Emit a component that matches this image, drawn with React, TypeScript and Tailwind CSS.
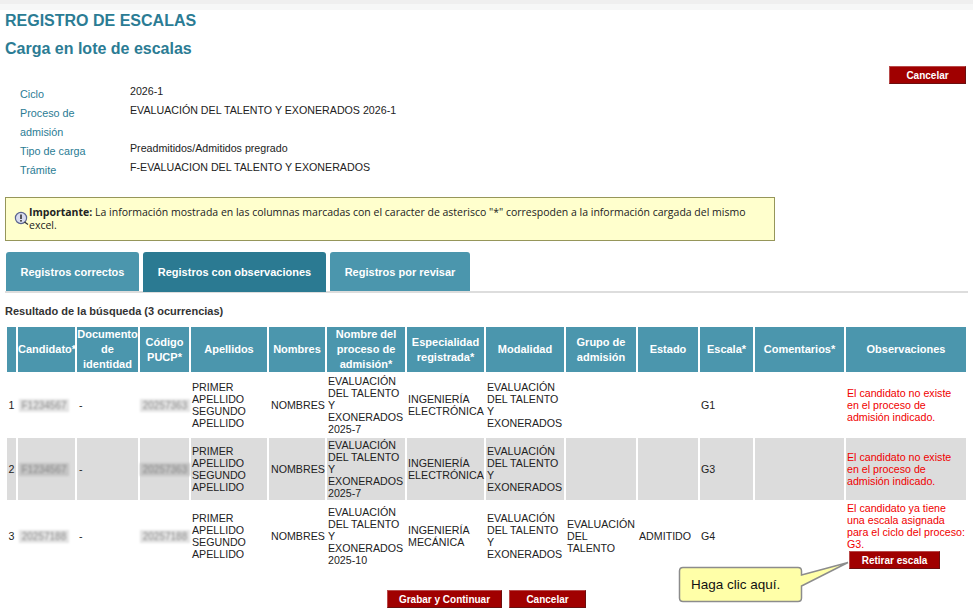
const columns = [
  { label: '', width: 'w-[9px]' },
  { label: 'Candidato*', width: 'w-[57px]' },
  { label: 'Documento de identidad', width: 'w-[61px]' },
  { label: 'Código PUCP*', width: 'w-[49px]' },
  { label: 'Apellidos', width: 'w-[76px]' },
  { label: 'Nombres', width: 'w-[56px]' },
  { label: 'Nombre del proceso de admisión*', width: 'w-[78px]' },
  { label: 'Especialidad registrada*', width: 'w-[77px]' },
  { label: 'Modalidad', width: 'w-[78px]' },
  { label: 'Grupo de admisión', width: 'w-[70px]' },
  { label: 'Estado', width: 'w-[60px]' },
  { label: 'Escala*', width: 'w-[53px]' },
  { label: 'Comentarios*', width: 'w-[89px]' },
  { label: 'Observaciones', width: 'w-[120px]' },
];

const rows = [
  {
    n: 1,
    candidato: 'F1234567',
    codigo: '20257363',
    proceso: 'EVALUACIÓN DEL TALENTO Y EXONERADOS 2025-7',
    especialidad: 'INGENIERÍA ELECTRÓNICA',
    grupo: '',
    estado: '',
    escala: 'G1',
    obs: 'El candidato no existe en el proceso de admisión indicado.',
  },
  {
    n: 2,
    candidato: 'F1234567',
    codigo: '20257363',
    proceso: 'EVALUACIÓN DEL TALENTO Y EXONERADOS 2025-7',
    especialidad: 'INGENIERÍA ELECTRÓNICA',
    grupo: '',
    estado: '',
    escala: 'G3',
    obs: 'El candidato no existe en el proceso de admisión indicado.',
  },
  {
    n: 3,
    candidato: '20257188',
    codigo: '20257188',
    proceso: 'EVALUACIÓN DEL TALENTO Y EXONERADOS 2025-10',
    especialidad: 'INGENIERÍA MECÁNICA',
    grupo: 'EVALUACIÓN DEL TALENTO',
    estado: 'ADMITIDO',
    escala: 'G4',
    obs: 'El candidato ya tiene una escala asignada para el ciclo del proceso: G3.',
  },
];

const infoRows = [
  { label: 'Ciclo', value: '2026-1' },
  { label: 'Proceso de admisión', value: 'EVALUACIÓN DEL TALENTO Y EXONERADOS 2026-1' },
  { label: 'Tipo de carga', value: 'Preadmitidos/Admitidos pregrado' },
  { label: 'Trámite', value: 'F-EVALUACION DEL TALENTO Y EXONERADOS' },
];

function RedButton({ label, className }: { label: string; className: string }) {
  return (
    <button className={`h-[18px] border border-t-[#b84a4a] border-l-[#b84a4a] border-r-[#6b0f0f] border-b-[#6b0f0f] bg-[#a00000] pt-[2px] text-center text-[10px] font-bold leading-[14px] text-white ${className}`}>
      {label}
    </button>
  );
}

function Blurred({ text, halo }: { text: string; halo?: boolean }) {
  return (
    <span className={`block h-[13px] w-[50px] blur-[1.2px] ${halo ? 'bg-[#c4c4c4]' : 'bg-[#e4e4e4]'} text-center text-[10px] leading-[13px] text-[#8a8a8a]`}>
      {text}
    </span>
  );
}

export default function App() {
  return (
    <div className="relative h-[613px] w-[973px] overflow-hidden bg-white font-['Liberation_Sans',Arial,sans-serif] text-[#222]">
      <div className="h-[4px] bg-[#efefef]" />
      <div className="h-[6px] bg-[#f6f7f7]" />

      <div className="px-[5px]">
        <h1 className="mt-[1px] text-[16px] font-bold leading-[19px] text-[#2b7c94]">REGISTRO DE ESCALAS</h1>
        <h2 className="mt-[9px] text-[16px] font-bold leading-[19px] text-[#2b7c94]">Carga en lote de escalas</h2>

        <div className="mt-[8px] flex justify-end pr-[2px]">
          <RedButton label="Cancelar" className="w-[77px]" />
        </div>

        <div className="mt-px pl-[15px]">
          {infoRows.map((row) => (
            <div key={row.label} className="flex leading-[19px]">
              <div className="w-[110px] pr-[30px] text-[10.8px] text-[#2b7c94]">{row.label}</div>
              <div className="mt-[-3px] text-[10.67px] text-[#222]">{row.value}</div>
            </div>
          ))}
        </div>

        <div className="mt-[17px] flex h-[44px] w-[770px] items-start border border-[#96965a] bg-[#ffffcd] pl-[8px] pr-[10px] pt-[8px]">
          <svg width="15" height="15" viewBox="0 0 15 15" className="mt-[5px] shrink-0">
            <circle cx="7" cy="7" r="5.6" fill="#d9dcef" stroke="#5a6490" strokeWidth="1.2" />
            <rect x="6.2" y="3.5" width="1.6" height="4.5" fill="#333" />
            <rect x="6.2" y="9" width="1.6" height="1.6" fill="#333" />
            <path d="M10.5 11 L14 13.5" stroke="#333" strokeWidth="1.2" />
          </svg>
          <p className="font-['Open_Sans',sans-serif] text-[10.5px] leading-[13px] text-[#222]">
            <b>Importante:</b> La información mostrada en las columnas marcadas con el caracter de asterisco "*" correspoden a la información cargada del mismo excel.
          </p>
        </div>

        <div className="mt-[11px] flex h-[41px] items-start gap-[4px] border-b-2 border-[#dddddd] pl-px">
          <div className="flex h-[39px] w-[133px] items-center justify-center rounded-t-[3px] bg-[#4b96ad] pt-px text-[11px] font-bold text-white">Registros correctos</div>
          <div className="flex h-[40px] w-[183px] items-center justify-center rounded-t-[3px] bg-[#2b7a92] pt-px text-[11px] font-bold text-white">Registros con observaciones</div>
          <div className="flex h-[39px] w-[140px] items-center justify-center rounded-t-[3px] bg-[#4b96ad] pt-px text-[11px] font-bold text-white">Registros por revisar</div>
        </div>

        <p className="mt-[11px] text-[11px] font-bold leading-[14px] text-[#333]">Resultado de la búsqueda (3 ocurrencias)</p>

        <table className="mt-[9px] w-[963px] table-fixed border-separate border-spacing-x-[2px] border-spacing-y-0 text-[10.67px] leading-[12px] text-[#222]">
          <thead>
            <tr>
              {columns.map((col) => (
                <th key={col.label} className={`${col.width} h-[45px] bg-[#4b96ad] p-0 text-center text-[11px] font-bold leading-[15px] text-white`}>
                  {col.label}
                </th>
              ))}
            </tr>
          </thead>
          <tbody>
            {rows.map((row) => {
              const bg = row.n === 2 ? 'bg-[#dcdcdc]' : '';
              const td = `${bg} px-px align-middle`;
              return (
                <tr key={row.n} className={row.n === 1 ? 'h-[66px]' : row.n === 2 ? 'h-[62px]' : 'h-[72px]'}>
                  <td className={`${td} text-center`}>{row.n}</td>
                  <td className={td}><Blurred text={row.candidato} halo={row.n === 2} /></td>
                  <td className={`${td} pl-[2px]`}>-</td>
                  <td className={`${bg} p-0 align-middle`}><Blurred text={row.codigo} halo={row.n === 2} /></td>
                  <td className={td}>PRIMER APELLIDO SEGUNDO APELLIDO</td>
                  <td className={`${td} pl-[2px] pr-0`}>NOMBRES</td>
                  <td className={td}>{row.proceso}</td>
                  <td className={td}>{row.especialidad}</td>
                  <td className={`${td} pr-0`}>EVALUACIÓN DEL TALENTO Y EXONERADOS</td>
                  <td className={td}>{row.grupo}</td>
                  <td className={td}>{row.estado}</td>
                  <td className={td}>{row.escala}</td>
                  <td className={td}></td>
                  <td className={`${bg} px-px ${row.n === 3 ? 'align-top pt-[2px]' : 'align-middle'} text-[#f00000]`}>
                    <div>{row.obs}</div>
                    {row.n === 3 && (
                      <RedButton label="Retirar escala" className="ml-[2px] mt-px block w-[91px]" />
                    )}
                  </td>
                </tr>
              );
            })}
          </tbody>
        </table>

        <div className="mt-[18px] flex justify-center gap-[7px]">
          <RedButton label="Grabar y Continuar" className="w-[115px]" />
          <RedButton label="Cancelar" className="w-[77px]" />
        </div>
      </div>

      {/* globo de ayuda sobre el botón Retirar escala */}
      <div className="absolute left-[678px] top-[560px] h-[44px] w-[175px]">
        <svg width="175" height="44" viewBox="0 0 175 44" className="absolute inset-0">
          <path
            d="M5 7.5 H120 Q123.5 7.5 123.5 11 V15 L170 2.5 L123.5 26 V38 Q123.5 41.5 120 41.5 H5 Q1.5 41.5 1.5 38 V11 Q1.5 7.5 5 7.5 Z"
            fill="#ffffa8"
            stroke="#8c8c8c"
            strokeWidth="1.5"
          />
        </svg>
        <span className="absolute left-[13px] top-[15px] text-[13.5px] leading-[20px] text-[#111]">Haga clic aquí.</span>
      </div>
    </div>
  );
}
